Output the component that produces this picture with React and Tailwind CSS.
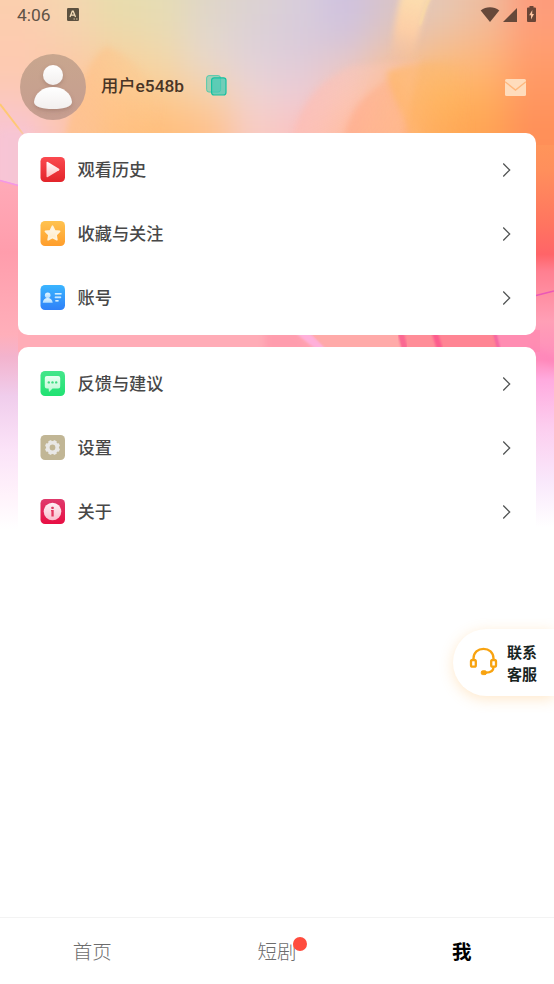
import React from "react";

// Soft colour wash behind the profile header, row by row from the top.
const wash = [
  ["#fbcfae", "#f5d6b0", "#e8dcac", "#e6dcb4", "#dfd6c8", "#dcd2d2", "#d8cddb", "#cfc2e0", "#d8c4c8", "#e6c8b4", "#eebd9f", "#fd9c7c"],
  ["#fdcbb0", "#f8d0ae", "#f0d6a8", "#ecdab0", "#e3d8ce", "#ddd0d8", "#d9cbdb", "#d5c5d8", "#e3c4b8", "#f0bf9c", "#f8b88c", "#ff9f74"],
  ["#fdcab0", "#fcc8a6", "#fcd09a", "#f6d5a4", "#ebd6c4", "#e4d3d8", "#e2ccd8", "#ebc8c4", "#f8c09a", "#fdbc78", "#ffb473", "#ff9a68"],
  ["#fbc8bc", "#fcc6a6", "#ffc88e", "#fdc98e", "#f8cfa4", "#f0d2d0", "#eecbd4", "#fcc4b4", "#ffb884", "#ffb65e", "#ffae5c", "#ff9660"],
  ["#f8c4d4", "#fcc6b0", "#ffc080", "#ffbe7c", "#ffc08a", "#f8ccc4", "#fbc2c0", "#ffb896", "#ffb486", "#ffa858", "#ffa454", "#ff8f58"],
];

function Backdrop() {
  return (
    <svg className="absolute inset-x-0 top-0 h-[540px] w-[554px]" viewBox="0 0 554 540" colorInterpolationFilters="sRGB" aria-hidden="true">
      <defs>
        <linearGradient id="leftEdge" gradientUnits="userSpaceOnUse" x1="0" x2="0" y1="180" y2="540">
          <stop offset="0" stopColor="#ffaab8" />
          <stop offset=".2" stopColor="#ff9dac" />
          <stop offset=".43" stopColor="#ffafba" />
          <stop offset=".49" stopColor="#f3b3cd" />
          <stop offset=".6" stopColor="#f0cdec" />
          <stop offset=".75" stopColor="#fbe3f8" />
          <stop offset=".88" stopColor="#fff3fb" />
          <stop offset=".97" stopColor="#ffffff" />
        </linearGradient>
        <linearGradient id="rightEdge" gradientUnits="userSpaceOnUse" x1="0" x2="0" y1="120" y2="540">
          <stop offset="0" stopColor="#ff9a58" />
          <stop offset=".12" stopColor="#ff8f5c" />
          <stop offset=".25" stopColor="#ff7460" />
          <stop offset=".32" stopColor="#ff6468" />
          <stop offset=".36" stopColor="#ff7f90" />
          <stop offset=".48" stopColor="#ff9fb6" />
          <stop offset=".57" stopColor="#ff8dbc" />
          <stop offset=".62" stopColor="#ffabdf" />
          <stop offset=".73" stopColor="#fccdee" />
          <stop offset=".86" stopColor="#f9e8fb" />
          <stop offset=".97" stopColor="#ffffff" />
        </linearGradient>
        <linearGradient id="petal" gradientUnits="userSpaceOnUse" x1="70" x2="165" y1="90" y2="105">
          <stop offset="0" stopColor="#ffbf82" stopOpacity=".65" />
          <stop offset="1" stopColor="#ffc488" stopOpacity="0" />
        </linearGradient>
        <linearGradient id="archOuter" gradientUnits="userSpaceOnUse" x1="295" x2="350" y1="110" y2="125">
          <stop offset="0" stopColor="#fdbbb2" stopOpacity=".75" />
          <stop offset="1" stopColor="#fec8b8" stopOpacity=".35" />
        </linearGradient>
        <linearGradient id="archInner" gradientUnits="userSpaceOnUse" x1="345" x2="415" y1="110" y2="120">
          <stop offset="0" stopColor="#ffa888" stopOpacity=".65" />
          <stop offset="1" stopColor="#ffb685" stopOpacity=".3" />
        </linearGradient>
        <linearGradient id="sun" gradientUnits="userSpaceOnUse" x1="388" x2="470" y1="90" y2="85">
          <stop offset="0" stopColor="#ffb766" stopOpacity=".7" />
          <stop offset="1" stopColor="#ffb35c" stopOpacity="0" />
        </linearGradient>
        <linearGradient id="ray" gradientUnits="userSpaceOnUse" x1="415" x2="399" y1="0" y2="62">
          <stop offset="0" stopColor="#fcdcae" />
          <stop offset=".5" stopColor="#ffcfa4" stopOpacity=".9" />
          <stop offset="1" stopColor="#ffc294" stopOpacity="0" />
        </linearGradient>
        <filter id="b3" x="-40%" y="-40%" width="180%" height="180%"><feGaussianBlur stdDeviation="3" /></filter>
        <filter id="b1" x="-40%" y="-40%" width="180%" height="180%"><feGaussianBlur stdDeviation="1" /></filter>
        <filter id="wash" filterUnits="userSpaceOnUse" x="-60" y="-60" width="680" height="300"><feGaussianBlur stdDeviation="17" /></filter>
      </defs>

      <g filter="url(#wash)">
        {wash.map((row, r) =>
          row.map((color, c) => {
            const left = c === 0 ? -60 : c * 46.2;
            const right = c === 11 ? 620 : (c + 1) * 46.2;
            const top = r === 0 ? -60 : r * 30 - 5;
            const bottom = r === 4 ? 240 : (r + 1) * 30 - 5;
            return <rect key={`${r}-${c}`} x={left} y={top} width={right - left + 1} height={bottom - top + 1} fill={color} />;
          })
        )}
      </g>
      <path d="M62 150C72 110 84 62 106 46C145 60 165 100 175 150z" fill="url(#petal)" filter="url(#b3)" />
      <path d="M292 150C294 112 315 82 352 66L420 60L400 150z" fill="url(#archOuter)" filter="url(#b3)" />
      <path d="M342 150C346 115 360 95 392 78L430 150z" fill="url(#archInner)" filter="url(#b3)" />
      <path d="M416 150C408 118 390 98 387 72C420 58 450 60 490 70V150z" fill="url(#sun)" filter="url(#b3)" />
      <path d="M402 -8L431 -8C424 12 421 30 412 58L391 62C393 35 396 12 402 -8z" fill="url(#ray)" filter="url(#b3)" />
      <path d="M430 -2C424 8 423 15 420 25" fill="none" stroke="#ffe1a0" strokeWidth="2" filter="url(#b1)" opacity=".7" />
      <path d="M0 104L23 134" stroke="#ffc96b" strokeWidth="2" opacity=".9" />

      <path d="M0 130H30V190H0z" fill="#f6c6d6" opacity=".6" filter="url(#b3)" />
      <path d="M0 180L30 188L270 190V540H0z" fill="url(#leftEdge)" />
      <path d="M0 180.500L22 186.500" stroke="#f397e8" strokeWidth="1.500" />
      <path d="M270 145H554V540H270z" fill="url(#rightEdge)" />
      <rect x="18" y="330" width="384" height="22" fill="#ffacb7" />
      <path d="M265 330H295L315 352H265z" fill="#ff9dae" filter="url(#b3)" />
      <path d="M308 330H401L405 352H328z" fill="#ffaaa9" />
      <path d="M292 330H306L327 350H317z" fill="#ffb0da" filter="url(#b1)" />
      <path d="M398 330H438V352H403z" fill="#ff8d98" />
      <path d="M400 330L405 350" stroke="#fa6791" strokeWidth="6" filter="url(#b1)" />
      <path d="M433 330H500V352H440z" fill="#ff8594" />
      <path d="M434 330L440 350" stroke="#fc5c8d" strokeWidth="6" filter="url(#b1)" />
      <path d="M493 330H540V352H499z" fill="#ff8db2" />
      <path d="M494 330L499 350" stroke="#f35f9f" strokeWidth="3" filter="url(#b1)" />
      <path d="M534 296L554 291" stroke="#eb58b7" strokeWidth="1.500" />
      <path d="M530 345L560 358V370L530 355z" fill="#ff7fb8" filter="url(#b3)" opacity=".4" />
    </svg>
  );
}

function StatusBar() {
  return (
    <header className="flex h-[30px] items-center pl-[17px] pr-[18px] text-[#5f5346]">
      <span className="mt-px font-[Roboto] text-[17.400px] leading-none">4:06</span>
      <svg className="ml-[16px] mb-px h-[13px] w-[12px]" viewBox="0 0 12 13">
        <rect width="12" height="13" rx="1.200" fill="#5c5140" />
        <path d="M3 9L5.300 3.200H6.200L8.500 9M4 7.100H7.500" fill="none" stroke="#f3dcb8" strokeWidth="1.300" />
        <path d="M6.500 11H8M9 11H10.500" stroke="#f3dcb8" strokeWidth=".8" />
      </svg>
      <div className="mb-[2px] ml-auto flex items-center">
        <svg className="mt-px h-[15px] w-[20px]" viewBox="0 0 20 15"><path d="M.7 3.400C6 -.9 14 -.9 19.300 3.400L10 15z" fill="#66493a" /></svg>
        <svg className="ml-[3px] mt-px h-[14px] w-[14px]" viewBox="0 0 14 14"><path d="M14 0V14H0z" fill="#66493a" /></svg>
        <svg className="ml-[10px] h-[16px] w-[9px]" viewBox="0 0 9 16">
          <path d="M2.500 0H6.500V1.500H8A1 1 0 0 1 9 2.500V15A1 1 0 0 1 8 16H1A1 1 0 0 1 0 15V2.500A1 1 0 0 1 1 1.500H2.500z" fill="#6a4536" />
          <path d="M5.300 4L2.200 9.300H4V13.500L7 7.900H5.200z" fill="#ffc5a0" />
        </svg>
      </div>
    </header>
  );
}

function Avatar() {
  return (
    <svg className="size-[66px] shrink-0" viewBox="0 0 66 66">
      <defs>
        <linearGradient id="avatarBg" x1="0" x2="0" y1="0" y2="1"><stop stopColor="#c8a68e" /><stop offset="1" stopColor="#c69d90" /></linearGradient>
        <linearGradient id="avatarFg" x1="0" x2="0" y1="0" y2="1"><stop stopColor="#ffffff" /><stop offset="1" stopColor="#f2efee" /></linearGradient>
        <filter id="avatarShadow" x="-30%" y="-30%" width="160%" height="160%"><feDropShadow dx="0" dy="2" stdDeviation="2" floodColor="#704b40" floodOpacity=".3" /></filter>
      </defs>
      <circle cx="33" cy="33" r="33" fill="url(#avatarBg)" />
      <g fill="url(#avatarFg)" filter="url(#avatarShadow)">
        <circle cx="33" cy="21" r="10" />
        <path d="M14 48C15 39 23 33 33 33S51 39 52 48C52 52.500 44 55 33 55S14 52.500 14 48z" />
      </g>
    </svg>
  );
}

function Profile() {
  return (
    <section className="flex h-[103px] items-center pl-5 pr-[28px]">
      <div className="mt-[11px] flex w-full items-center">
        <Avatar />
        <span className="mb-[3px] ml-[15px] whitespace-nowrap font-[Roboto,'Noto_Sans_CJK_SC',sans-serif] text-[17.300px] font-medium leading-6 text-[#493526]">用户e548b</span>
        <svg className="mb-[4px] ml-[22px] h-[21px] w-[21px]" viewBox="0 0 21 21">
          <rect x=".6" y=".6" width="14" height="16.500" rx="2.500" fill="#35cbb0" fillOpacity=".4" stroke="#38c8aa" strokeOpacity=".8" />
          <rect x="5.600" y="2.800" width="14.400" height="17.200" rx="2.500" fill="#40cbb5" fillOpacity=".72" stroke="#15c1a0" strokeWidth="1.200" />
        </svg>
        <svg className="ml-auto mt-px h-[17px] w-[21px]" viewBox="0 0 21 17">
          <rect width="21" height="17" rx="1.500" fill="#ffdcbc" />
          <path d="M0 2.700L10.500 11L21 2.700" fill="none" stroke="#ffb77c" strokeWidth="1.400" />
        </svg>
      </div>
    </section>
  );
}

const tileColors = {
  history: ["#fb4a50", "#e2242a"],
  favorite: ["#ffc34f", "#ff9d2b"],
  account: ["#3ab5ff", "#2f80f8"],
  feedback: ["#45e68b", "#20e272"],
  settings: ["#c1b695", "#c1b695"],
  about: ["#df3a6c", "#e80e43"],
};

const gearTeeth = [0, 45, 90, 135, 180, 225, 270, 315];

function Glyph({ kind }) {
  const fill = `url(#${kind}Fg)`;
  if (kind === "history") return <path d="M6.500 5.800Q6.500 4.200 7.900 5L19 11.700Q20 12.500 19 13.300L7.900 20Q6.500 20.800 6.500 19.200z" fill={fill} />;
  if (kind === "favorite")
    return <path d="M12.500 5.200L14.700 9.700L19.600 10.400L16.100 13.900L16.900 18.800L12.500 16.500L8.100 18.800L8.900 13.900L5.400 10.400L10.300 9.700z" fill={fill} stroke="#fff3dc" strokeWidth="1.600" strokeLinejoin="round" />;
  if (kind === "account")
    return (
      <g fill={fill}>
        <circle cx="7.700" cy="10.300" r="2.800" />
        <path d="M2.700 17.800C3 14.600 5 13 7.700 13S12.400 14.600 12.700 17.800z" />
        <rect x="14.700" y="8" width="7" height="1.700" rx=".6" />
        <rect x="14.700" y="11.500" width="6.500" height="1.700" rx=".6" />
        <rect x="15.200" y="15" width="3.500" height="1.700" rx=".6" />
      </g>
    );
  if (kind === "feedback")
    return (
      <g>
        <path d="M6.800 5H18.200A2 2 0 0 1 20.200 7V15.500A2 2 0 0 1 18.200 17.500H12.500L9 21L8.600 17.500H6.800A2 2 0 0 1 4.800 15.500V7A2 2 0 0 1 6.800 5z" fill={fill} />
        <g fill="#3edb80"><circle cx="8.800" cy="11.400" r="1.200" /><circle cx="12.500" cy="11.400" r="1.200" /><circle cx="16.200" cy="11.400" r="1.200" /></g>
      </g>
    );
  if (kind === "settings")
    return (
      <g>
        {gearTeeth.map((a) => <path key={a} d="M10.300 9L11 5H14L14.700 9z" fill="#e9e8e6" transform={`rotate(${a + 22.5} 12.5 12.5)`} />)}
        <circle cx="12.500" cy="12.500" r="4.700" fill="none" stroke="#e9e8e6" strokeWidth="3.600" />
      </g>
    );
  return (
    <g>
      <circle cx="12.500" cy="12.500" r="8.800" fill={fill} />
      <rect x="11.400" y="7.700" width="2.300" height="2.200" rx=".5" fill="#da3b62" />
      <path d="M11 11H13.700V17.500H11.400V12.300H11z" fill="#e3365f" />
    </g>
  );
}

const glyphColors = {
  history: ["#ffffff", "#ffc1c1"],
  favorite: ["#fffaf0", "#ffe9c4"],
  account: ["#e4f6ff", "#b0dcff"],
  feedback: ["#eafff2", "#b9f9d3"],
  settings: ["#e9e8e6", "#e9e8e6"],
  about: ["#fff1f5", "#f9bdcd"],
};

function Tile({ kind }) {
  const [top, bottom] = tileColors[kind];
  const [light, dark] = glyphColors[kind];
  return (
    <svg className="size-[25px] shrink-0" viewBox="0 0 25 25">
      <defs>
        <linearGradient id={`${kind}Bg`} x1="0" x2="0" y1="0" y2="1"><stop stopColor={top} /><stop offset="1" stopColor={bottom} /></linearGradient>
        <linearGradient id={`${kind}Fg`} x1="0" x2="0" y1="0" y2="1"><stop stopColor={light} /><stop offset="1" stopColor={dark} /></linearGradient>
      </defs>
      <rect x=".5" width="24.500" height="25" rx="4.500" fill={`url(#${kind}Bg)`} />
      <Glyph kind={kind} />
    </svg>
  );
}

function MenuCard({ items }) {
  return (
    <ul className="rounded-[10px] bg-white pb-[5px] pt-[4.500px]">
      {items.map(([kind, label]) => (
        <li key={kind} className="flex h-16 items-center pl-[22px] pr-[25px]">
          <Tile kind={kind} />
          <span className="mb-[2px] ml-[12.500px] text-[17.200px] font-medium leading-6 text-[#484848]">{label}</span>
          <svg className="ml-auto h-[14px] w-[8px]" viewBox="0 0 8 14"><path d="M.2 .5L6.700 7L.2 13.500" fill="none" stroke="#505353" strokeWidth="1.300" /></svg>
        </li>
      ))}
    </ul>
  );
}

function SupportButton() {
  return (
    <button className="absolute right-0 top-[629px] flex h-[67px] w-[101px] items-center rounded-l-full bg-white pl-[16px] shadow-[0_3px_14px_rgba(255,178,80,0.3)]">
      <svg className="mb-[3px] h-[29px] w-[29px]" viewBox="0 0 29 29" fill="none" stroke="#f8a310" strokeWidth="2.300">
        <path d="M4.500 12.500V11.500C4.500 5.500 9 1.800 14.500 1.800S24.500 5.500 24.500 11.500V12.500" />
        <rect x="2" y="13" width="4.800" height="6.700" rx="1.500" />
        <rect x="22.200" y="13" width="4.800" height="6.700" rx="1.500" />
        <path d="M24.500 20C24.500 23.500 22 25.600 17 25.600" />
        <rect x="12.300" y="23.800" width="5" height="3.800" rx="1.300" fill="#f8a310" strokeWidth="1" />
      </svg>
      <span className="ml-[9px] w-[31px] text-left text-[15px] font-bold leading-[22px] text-[#18241f]">联系<br />客服</span>
    </button>
  );
}

function BottomNav() {
  return (
    <nav className="grid h-[67px] grid-cols-3 border-t border-[#f3f3f3] bg-white pb-px text-[19.500px] leading-none">
      <span className="flex items-center justify-center font-light text-[#6c6c6c]">首页</span>
      <span className="flex items-center justify-center font-light text-[#6c6c6c]">
        <span className="relative">
          短剧
          <i className="absolute -right-[10px] -top-[4px] size-[14px] rounded-full bg-[#ff4c3e]" />
        </span>
      </span>
      <span className="flex items-center justify-center font-bold text-black">我</span>
    </nav>
  );
}

export default function App() {
  return (
    <div className="relative flex h-[984px] w-[554px] flex-col overflow-hidden bg-white font-['Noto_Sans_CJK_SC',sans-serif]">
      <Backdrop />
      <div className="relative flex-1">
        <StatusBar />
        <Profile />
        <main className="flex flex-col gap-[12.500px] px-[18px]">
          <MenuCard items={[["history", "观看历史"], ["favorite", "收藏与关注"], ["account", "账号"]]} />
          <MenuCard items={[["feedback", "反馈与建议"], ["settings", "设置"], ["about", "关于"]]} />
        </main>
      </div>
      <SupportButton />
      <BottomNav />
    </div>
  );
}
